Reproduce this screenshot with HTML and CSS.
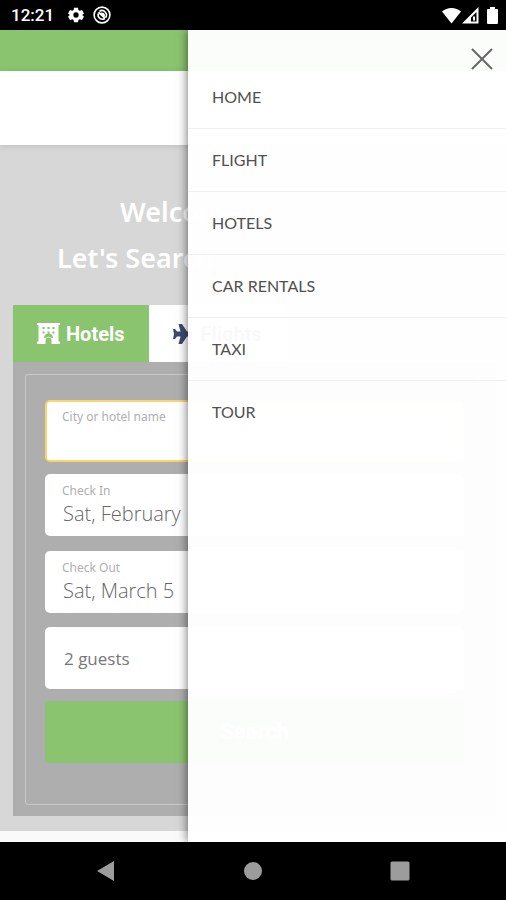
FILE: index.html
```
<!DOCTYPE html>
<html lang="en">
<head>
<meta charset="utf-8">
<meta name="viewport" content="width=device-width, initial-scale=1">
<title>Travel booking</title>
<link rel="stylesheet" href="styles.css">
</head>
<body>
<div class="status">
  <span class="time">12:21</span>
  <svg class="gear" width="16" height="16" viewBox="0 0 24 24"><path fill="#fff" fill-rule="evenodd" d="M9 1h6l.6 3.600 1.900 1.100L21 4.400l3 5.200-2.800 2.300v.2L24 14.400l-3 5.200-3.500-1.300-1.900 1.100L15 23H9l-.6-3.600-1.900-1.100L3 19.600l-3-5.200 2.800-2.300v-.2L0 9.600l3-5.200 3.500 1.300 1.900-1.100zM12 8a4 4 0 1 0 0 8 4 4 0 0 0 0-8z"/></svg>
  <svg width="18" height="18" viewBox="0 0 18 18" fill="none" stroke="#fff"><circle cx="9" cy="9" r="7.900" stroke-width="1.600"/><path stroke-width="1.600" d="M5.300 7.500a4.400 4.400 0 0 0 6.600 5M6.500 5.200a4.500 4.500 0 0 1 6 6.500"/><path stroke-width="2" d="M5.500 6.200L12 12M8 7.500q3-.5 3 2.500"/></svg>
  <span class="signals">
    <svg width="19" height="17" viewBox="0 0 19 17"><path fill="#fff" d="M0 4.500C5-.3 14-.3 19 4.500L9.500 16.500z"/></svg>
    <svg width="17" height="17" viewBox="0 0 17 17"><path fill="#fff" fill-rule="evenodd" d="M16.500 0v16.500H0zM14.500 5L9 10.500v4h5.500z"/><path fill="#fff" d="M11 9.500h2v4h-2z"/></svg>
    <svg class="battery" width="11" height="17" viewBox="0 0 11 17"><path fill="#fff" d="M3 0h5v2h2q1 0 1 1v13q0 1-1 1H1q-1 0-1-1V3q0-1 1-1h2z"/></svg>
  </span>
</div>

<div class="screen">
  <div class="topbar"></div>
  <header class="header"></header>
  <main class="hero">
    <h1 class="title"><span class="line first">Welcome</span><span class="line">Let's Search</span></h1>
    <div class="tabs">
      <button type="button" class="tab active">
        <svg width="23" height="21" viewBox="0 0 23 21"><path fill="#fff" fill-rule="evenodd" d="M0 0h23v2h-1.500v16.500H23V21h-8.500v-3.500a3 3 0 0 0-6 0V21H0v-2.500h1.500V2H0zM5.500 4v2h2V4zm5 0v2h2V4zm5 0v2h2V4zM5.500 8.500v2h2v-2zm5 0v2h2v-2zm5 0v2h2v-2zM7 15h2a3 3 0 0 1 5 0h2a4.500 4.500 0 0 0-9 0z"/></svg>
        Hotels</button>
      <button type="button" class="tab">
        <svg width="22" height="20" viewBox="0 0 22 20"><path fill="#3d4973" d="M0 5h2l2 2.500h3.500L5.500 0H9l5 7.500h3.500q2.500.6 2.500 2.500t-2.500 2.500H14L9 20H5.500l2-7.500H4L2 15H0l1-5z"/></svg>
        Flights</button>
    </div>
    <div class="panel">
      <form class="form">
        <label class="field focused"><span class="caption">City or hotel name</span><input class="value" type="text"></label>
        <label class="field"><span class="caption">Check In</span><input class="value" type="text" value="Sat, February"></label>
        <label class="field late"><span class="caption">Check Out</span><input class="value" type="text" value="Sat, March 5"></label>
        <label class="field late"><input class="value guests" type="text" value="2 guests" aria-label="Guests"></label>
        <button type="button" class="search">Search</button>
      </form>
    </div>
  </main>
  <aside class="drawer">
    <button type="button" class="close" aria-label="Close menu"><svg width="22" height="22" viewBox="0 0 22 22"><path stroke="#666" stroke-width="2" d="M1 1l20 20M21 1L1 21"/></svg></button>
    <nav class="menu">
      <a href="#home">HOME</a>
      <a href="#flight">FLIGHT</a>
      <a href="#hotels">HOTELS</a>
      <a href="#cars">CAR RENTALS</a>
      <a href="#taxi">TAXI</a>
      <a href="#tour">TOUR</a>
    </nav>
  </aside>
</div>

<div class="navbar">
  <button type="button" aria-label="Back"><svg width="20" height="22" viewBox="0 0 20 22"><path fill="#9c9c9c" d="M18 1v20L1 11z"/></svg></button>
  <button type="button" aria-label="Home"><svg width="20" height="20" viewBox="0 0 20 20"><circle cx="10" cy="10" r="9" fill="#9c9c9c"/></svg></button>
  <button type="button" aria-label="Recent apps"><svg width="20" height="20" viewBox="0 0 20 20"><rect x=".5" y=".5" width="19" height="19" rx="1.500" fill="#9c9c9c"/></svg></button>
</div>
</body>
</html>
```

FILE: styles.css
```
* { box-sizing: border-box; }

body {
  margin: 0;
  min-height: 100vh;
  display: flex;
  flex-direction: column;
  background: #000;
  font-family: "Noto Sans", sans-serif;
}

button {
  border: 0;
  padding: 0;
  background: none;
  font: inherit;
}

svg { display: block; flex: none; }

.status {
  height: 30px;
  padding: 0 8px 0 11px;
  display: flex;
  align-items: center;
  gap: 9px;
  color: #fff;
}

.time {
  font: 500 17px/30px Roboto, sans-serif;
}

.gear { margin-left: 5px; }

.signals {
  margin-left: auto;
  display: flex;
  gap: 1px;
}

.battery { margin-left: 7px; }

.screen {
  flex: 1;
  position: relative;
  overflow: hidden;
  background: #fafafa;
}

.topbar {
  height: 41px;
  background: #8bc46f;
}

.header {
  position: relative;
  height: 74px;
  background: #fff;
  box-shadow: 0 1px 6px rgba(0, 0, 0, 0.12);
}

.hero {
  padding: 44px 10px 15px 13px;
  background: #d7d7d7;
}

.title {
  margin: 0 0 24px;
  padding-left: 44px;
  color: #fff;
  font: 600 27px/46px "Noto Sans", sans-serif;
  white-space: nowrap;
}

.line { display: block; }

.first { padding-left: 63px; }

.tabs { display: flex; }

.tab {
  height: 57px;
  padding: 0 24px;
  display: flex;
  align-items: center;
  gap: 6px;
  background: #fff;
  color: #3d4973;
  font: 700 20px/24px Roboto, sans-serif;
}

.tab.active {
  background: #8bc46f;
  color: #fff;
}

.panel {
  padding: 12px 16px 11px 12px;
  background: #aeaeae;
}

.form {
  padding: 25px 15px 41px 19px;
  border: 1px solid #cacaca;
  border-radius: 3px;
  display: flex;
  flex-direction: column;
  gap: 12px;
}

.field {
  height: 62px;
  padding: 8px 15px;
  border: 2px solid #fff;
  border-radius: 5px;
  background: #fff;
}

.field.focused { border-color: #fbd56b; }

.field.late { margin-top: 3px; }

.field.late + .field.late { margin-top: 2px; }

.caption {
  display: block;
  color: #b0b0b0;
  font-size: 12px;
  line-height: 14px;
}

.value {
  display: block;
  width: 100%;
  height: 32px;
  padding: 0 1px;
  border: 0;
  outline: 0;
  background: transparent;
  color: #666;
  font: 300 20px/32px "Open Sans", sans-serif;
}

.guests {
  height: 42px;
  padding: 0 2px;
  color: #777;
  font-size: 17px;
  font-weight: 400;
}

.search {
  height: 62px;
  border-radius: 5px;
  background: #8bc46f;
  color: #fff;
  font: 700 22px/26px Roboto, sans-serif;
}

.drawer {
  position: absolute;
  top: 0;
  right: 0;
  bottom: 0;
  width: 318px;
  max-width: 85%;
  background: rgba(255, 255, 255, 0.97);
  box-shadow: 0 0 10px rgba(0, 0, 0, 0.6);
}

.close {
  position: absolute;
  top: 18px;
  right: 13px;
}

.menu { padding-top: 36px; }

.menu a {
  display: block;
  padding: 19px 24px;
  border-bottom: 1px solid #f0f0f0;
  color: #505050;
  font: 400 16px/24px Lato, sans-serif;
  text-decoration: none;
}

.menu a:last-child { border-bottom: 0; }

.navbar {
  height: 58px;
  padding: 0 96px;
  display: flex;
  align-items: center;
  justify-content: space-between;
}
```
